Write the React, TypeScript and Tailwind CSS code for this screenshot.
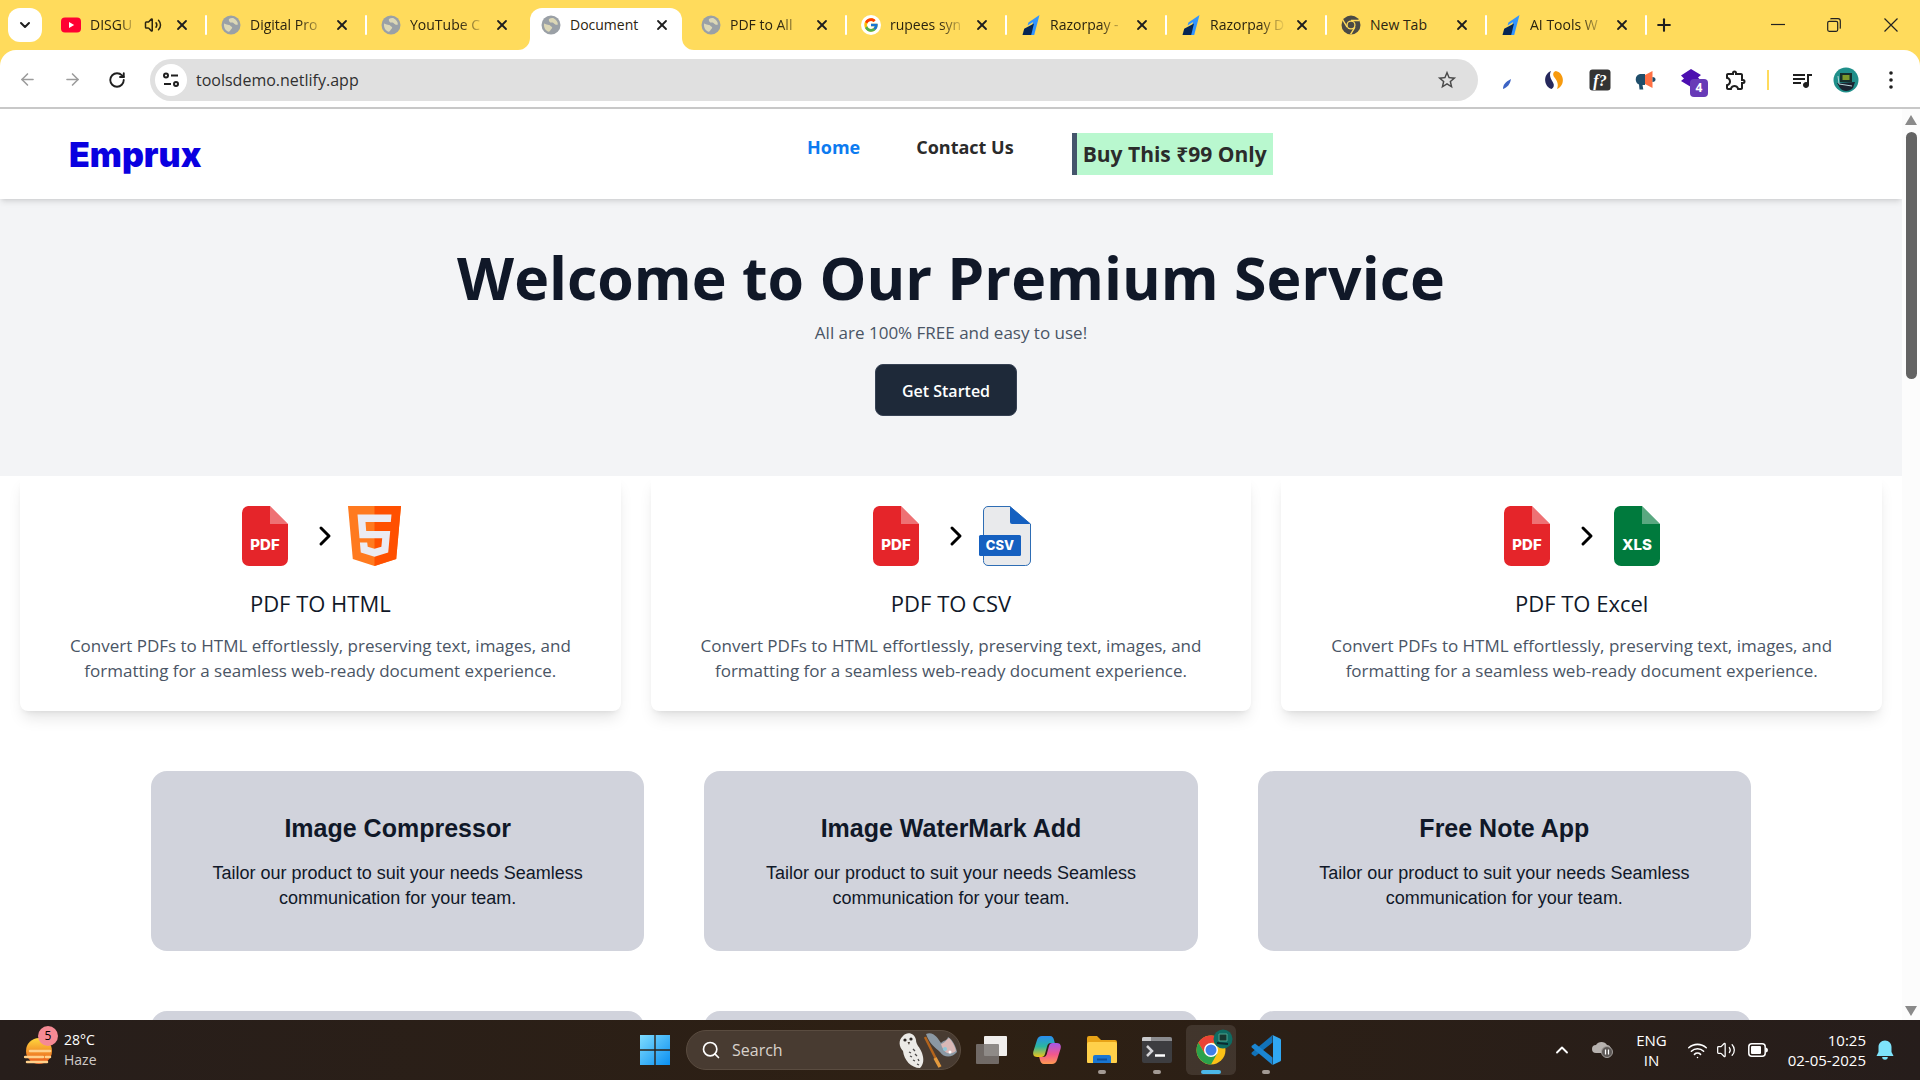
import type { ReactNode } from "react";
import {
  ArrowLeft,
  ArrowRight,
  ChevronDown,
  ChevronRight,
  ChevronUp,
  Plus,
  RotateCw,
  Search,
  Volume2,
  Wifi,
  X,
} from "lucide-react";
import { FcGoogle } from "react-icons/fc";
import { MdOutlineExtension, MdQueueMusic, MdStarBorder } from "react-icons/md";

type Tab = {
  title: string;
  icon: ReactNode;
  active?: boolean;
  audio?: boolean;
  fade?: boolean;
};

function Globe() {
  return (
    <svg viewBox="0 0 20 20" className="size-5">
      <circle cx="10" cy="10" r="9.5" fill="#9aa0a6" />
      <path
        d="M3 8.500c2 .5 3.500 1.500 5 1.500 1.500.2 1.800 1.500 3 2 .8 1-.8 2-1.500 3-.5 1-1 1.800-2 1.700C4.500 15.500 2.500 12.500 3 8.500zM8 4c1.500-1 3.500-1.400 5-.6 2.500 1.200 4 3.800 3.800 6-1 .6-2.800.2-3.800-1-1-1-2.600-.4-3.600-.8C8 6.800 7.500 5 8 4z"
        fill="#e8e0b8"
        opacity=".85"
      />
    </svg>
  );
}

function YouTube() {
  return (
    <svg viewBox="0 0 20 20" className="size-5">
      <rect y="2.500" width="20" height="15" rx="4" fill="#ff0033" />
      <path d="M8 7l5.200 3L8 13z" fill="#fff" />
    </svg>
  );
}

function Google() {
  return (
    <span className="flex size-5 items-center justify-center rounded-full bg-white">
      <FcGoogle className="size-4" />
    </span>
  );
}

function Razorpay() {
  return (
    <svg viewBox="0 0 20 20" className="size-5">
      <path d="M18.500 0l-5.300 20H8.600l3.500-13-5.500 3.600.8-3z" fill="#3395ff" />
      <path d="M3.200 13.700L1.500 20h8.700L13 8.500z" fill="#072654" />
    </svg>
  );
}

function ChromeGray() {
  return (
    <svg viewBox="0 0 20 20" className="size-5">
      <circle cx="10" cy="10" r="9.500" fill="#4a4a45" />
      <path
        d="M10 5.500h8.500M6.100 12.200L1.900 5M13.900 12.200L9.600 19.400"
        stroke="#ffdb5c"
        strokeWidth="1.400"
      />
      <circle cx="10" cy="10" r="4.600" fill="#ffdb5c" />
      <circle cx="10" cy="10" r="3.300" fill="#4a4a45" />
    </svg>
  );
}

const tabs: Tab[] = [
  { title: "DISGU", icon: <YouTube />, audio: true, fade: true },
  { title: "Digital Pro", icon: <Globe />, fade: true },
  { title: "YouTube C", icon: <Globe />, fade: true },
  { title: "Document", icon: <Globe />, active: true },
  { title: "PDF to All", icon: <Globe />, fade: true },
  { title: "rupees syn", icon: <Google />, fade: true },
  { title: "Razorpay -", icon: <Razorpay />, fade: true },
  { title: "Razorpay D", icon: <Razorpay />, fade: true },
  { title: "New Tab", icon: <ChromeGray /> },
  { title: "AI Tools W", icon: <Razorpay />, fade: true },
];

function BrowserTab({ tab, separator }: { tab: Tab; separator: boolean }) {
  return (
    <div className="relative flex h-full w-40 shrink-0 items-end">
      <div
        className={
          tab.active
            ? "ml-1 flex h-[42px] w-[152px] items-center rounded-t-xl bg-white pl-[11px]"
            : "flex h-[42px] w-40 items-center pl-[15px]"
        }
      >
        <div className="mb-2 flex h-6 flex-1 items-center">
          {tab.icon}
          <a
            href="#"
            className={`ml-[9px] text-sm whitespace-nowrap text-[#2b2410] ${
              tab.audio ? "w-[46px]" : "w-[76px]"
            } ${tab.fade ? "[mask-image:linear-gradient(to_right,black_65%,transparent_100%)]" : ""}`}
          >
            {tab.title}
          </a>
          {tab.audio && <Volume2 className="ml-[8px] size-[18px] text-[#2b2410]" />}
          <button aria-label={`Close ${tab.title}`} className={tab.audio ? "ml-3" : "ml-2"}>
            <X className="size-4 text-[#1f1f1f]" strokeWidth={2.75} />
          </button>
        </div>
      </div>
      {tab.active && (
        <>
          <svg viewBox="0 0 12 12" className="absolute bottom-0 -left-2 size-3">
            <path d="M12 0v12H0A12 12 0 0 0 12 0z" fill="#fff" />
          </svg>
          <svg viewBox="0 0 12 12" className="absolute -right-2 bottom-0 size-3">
            <path d="M0 0v12h12A12 12 0 0 1 0 0z" fill="#fff" />
          </svg>
        </>
      )}
      {separator && (
        <span className="absolute top-[15px] -right-px h-5 w-0.5 rounded-full bg-white" />
      )}
    </div>
  );
}

function TabStrip() {
  return (
    <div className="flex h-[50px] shrink-0 items-center bg-[#ffdb5c]">
      <button
        aria-label="Search tabs"
        className="mr-1 ml-2 flex size-[34px] items-center justify-center rounded-xl bg-white"
      >
        <ChevronDown className="size-4 text-[#1f1f1f]" strokeWidth={3} />
      </button>
      {tabs.map((tab, i) => (
        <BrowserTab
          key={i}
          tab={tab}
          separator={!tab.active && !tabs[i + 1]?.active}
        />
      ))}
      <button aria-label="New tab" className="ml-2">
        <Plus className="size-5 text-[#1f1f1f]" strokeWidth={2.5} />
      </button>
      <div className="ml-auto flex items-center">
        <button aria-label="Minimize" className="flex w-14 justify-center">
          <svg viewBox="0 0 14 14" className="size-3.5">
            <path d="M0 6.500h14" stroke="#222" strokeWidth="1.200" />
          </svg>
        </button>
        <button aria-label="Restore" className="flex w-14 justify-center">
          <svg viewBox="0 0 14 14" className="size-3.5" fill="none" stroke="#222" strokeWidth="1.200">
            <rect x=".7" y="3.300" width="10" height="10" rx="1.500" />
            <path d="M3.500 1.200q.3-.5 1-.5H11q2.300 0 2.300 2.300v6.500q0 .7-.5 1" />
          </svg>
        </button>
        <button aria-label="Close" className="flex w-[58px] justify-center">
          <svg viewBox="0 0 14 14" className="size-3.5">
            <path d="M.5.5l13 13M13.500.5l-13 13" stroke="#222" strokeWidth="1.200" />
          </svg>
        </button>
      </div>
    </div>
  );
}

function Extensions() {
  return (
    <div className="flex items-center">
      <button aria-label="Pen extension" className="flex w-[46px] justify-center">
        <svg viewBox="0 0 20 20" className="size-5">
          <path d="M5 19c0-4 2-7 8-10-1 5-3 8-8 10z" fill="#3c63c4" />
        </svg>
      </button>
      <button aria-label="Swirl extension" className="flex w-[46px] justify-center">
        <svg viewBox="0 0 20 20" className="size-5">
          <path d="M7 1C2.500 3 .8 7 1.200 11c.5 4 3 7 6.300 8 2.500-1.500 3-4 1.500-6.500C7.300 9.500 4.500 5.500 7 1z" fill="#26285c" />
          <path d="M13 19c4.500-2 6.200-6 5.800-10-.5-4-3-7.300-7-8-3 1-3.300 4-1.300 6.500 2.500 3 4.500 7 2.500 11.500z" fill="#f79a0e" />
        </svg>
      </button>
      <button aria-label="WhatFont" className="flex w-[46px] justify-center">
        <svg viewBox="0 0 22 22" className="size-[22px]">
          <rect x=".5" y=".5" width="21" height="21" rx="3" fill="#333" />
          <text x="11" y="16.500" textAnchor="middle" fontFamily="Liberation Serif, serif" fontStyle="italic" fontWeight="700" fontSize="16" fill="#fff">
            f?
          </text>
        </svg>
      </button>
      <button aria-label="Megaphone extension" className="flex w-[46px] justify-center">
        <svg viewBox="0 0 22 22" className="size-[22px]">
          <path d="M10 5v11H7.500l.8 4.500H4.500L4 15.500C-.5 14-.5 6 5 5z" fill="#1f4e6b" />
          <path d="M10 6l7.500-4v17L10 15z" fill="#ff7043" />
          <path d="M17.500 8c4 0 4 5 0 5z" fill="#1f4e6b" />
        </svg>
      </button>
      <button aria-label="Layers extension" className="relative flex w-[46px] justify-center">
        <svg viewBox="0 0 22 22" className="size-[22px]">
          <path d="M10 0l10 6-3 2.500 3 3L10 18 0 12l3-2.500L0 6.500z" fill="#4c0fb0" />
        </svg>
        <span className="absolute top-[10px] left-[21px] flex size-[18px] items-center justify-center rounded bg-[#673ab7] text-xs font-bold text-white">
          4
        </span>
      </button>
      <button aria-label="Extensions" className="flex w-[42px] justify-center">
        <MdOutlineExtension className="size-6 text-[#1f1f1f]" />
      </button>
    </div>
  );
}

function Avatar() {
  return (
    <svg viewBox="0 0 26 26" className="size-[26px]">
      <circle cx="13" cy="13" r="12.500" fill="#1f8f8a" />
      <path d="M7 6h12v9H7z" fill="#16302c" />
      <path d="M9.500 8h7v5h-7z" fill="#7b9a2c" />
      <path d="M4 16l18-1-2 6c-4 4-10 4-13 0z" fill="#1a2430" />
      <path d="M5 9l1 8 13 2" stroke="#b9d6d8" fill="none" />
    </svg>
  );
}

function Toolbar() {
  return (
    <div className="shrink-0 bg-[#ffdb5c]">
      <div className="flex h-[57px] items-center rounded-t-2xl bg-white pt-0.5">
        <div className="flex w-[150px] items-center pl-[18px] text-[#1f1f1f]">
          <button aria-label="Back" className="flex w-[45px] text-[#9c9c9c]">
            <ArrowLeft className="size-[19px]" />
          </button>
          <button aria-label="Forward" className="flex w-[45px] text-[#9c9c9c]">
            <ArrowRight className="size-[19px]" />
          </button>
          <button aria-label="Reload">
            <RotateCw className="size-[18px]" strokeWidth={2.5} />
          </button>
        </div>
        <div className="flex h-[42px] flex-1 items-center rounded-full bg-[#e0e0e0] pr-5 pl-[5px]">
          <button
            aria-label="View site information"
            className="flex size-8 shrink-0 items-center justify-center rounded-full bg-white"
          >
            <svg viewBox="0 0 18 18" className="size-[18px]" fill="none" stroke="#1f1f1f" strokeWidth="2">
              <circle cx="4" cy="4.500" r="2" />
              <path d="M9 4.500h7M2 13h7" />
              <circle cx="14" cy="13" r="2" />
            </svg>
          </button>
          <input
            aria-label="Address"
            defaultValue="toolsdemo.netlify.app"
            className="ml-[9px] h-8 flex-1 bg-transparent text-base text-[#303030] outline-none"
          />
          <button aria-label="Bookmark this tab">
            <MdStarBorder className="size-[22px] text-[#4a4a4a]" />
          </button>
        </div>
        <div className="ml-[7px] flex items-center pr-[7px]">
          <Extensions />
          <span className="mx-[10px] h-5 w-0.5 bg-[#ffdb5c]" />
          <button aria-label="Media controls" className="flex w-[45px] justify-center">
            <MdQueueMusic className="size-6 text-[#1f1f1f]" />
          </button>
          <button aria-label="Profile" className="flex w-11 justify-center">
            <Avatar />
          </button>
          <button aria-label="Menu" className="flex w-[45px] justify-center">
            <svg viewBox="0 0 4 18" className="h-[18px] w-1" fill="#1f1f1f">
              <circle cx="2" cy="2" r="1.800" />
              <circle cx="2" cy="9" r="1.800" />
              <circle cx="2" cy="16" r="1.800" />
            </svg>
          </button>
        </div>
      </div>
      <div className="h-0.5 bg-[#c8c8c8]" />
    </div>
  );
}

function FileIcon({ label, color }: { label: string; color: string }) {
  return (
    <svg viewBox="0 0 60 60" className="size-[60px]">
      <path d="M13 0h22l18 18v35a7 7 0 0 1-7 7H14a7 7 0 0 1-7-7V7a7 7 0 0 1 6-7z" fill={color} />
      <path d="M35 0l18 18H35z" fill="#fff" opacity=".35" />
      <text x="30" y="44" textAnchor="middle" fontFamily="Inter, sans-serif" fontWeight="800" fontSize="15" fill="#fff">
        {label}
      </text>
    </svg>
  );
}

function HtmlIcon() {
  return (
    <svg viewBox="0 0 60 60" className="size-[60px]">
      <path d="M3 0h53l-4.800 53L29.500 60 7.800 53z" fill="#ff7a1f" />
      <path d="M29.500 0H56l-4.800 53L29.500 60z" fill="#ff5000" />
      <path
        d="M12.500 8.500h34l-.7 7.500H20.500l.7 9h24l-2 21.500-13.700 4.300-13.700-4.300-.9-10h7.300l.5 4.300 6.800 2 6.900-2 .8-8.500H14.500z"
        fill="#ebebf2"
      />
    </svg>
  );
}

function CsvIcon() {
  return (
    <svg viewBox="0 0 60 60" className="size-[60px]">
      <path
        d="M12 .5h22L54.500 18v36a5 5 0 0 1-5 5.500H12a4.500 4.500 0 0 1-4.500-5V5A4.500 4.500 0 0 1 12 .5z"
        fill="#e9eaec"
        stroke="#2e6db4"
      />
      <path d="M34 .5L54.500 18H36a2 2 0 0 1-2-2z" fill="#1560c0" />
      <rect x="3" y="29" width="42" height="21" rx="1.500" fill="#1560c0" />
      <text x="24" y="44" textAnchor="middle" fontFamily="Inter, sans-serif" fontWeight="800" fontSize="13" fill="#fff">
        CSV
      </text>
    </svg>
  );
}

const converters = [
  { title: "PDF TO HTML", icon: <HtmlIcon /> },
  { title: "PDF TO CSV", icon: <CsvIcon /> },
  { title: "PDF TO Excel", icon: <FileIcon label="XLS" color="#007a3d" /> },
];

const tools = ["Image Compressor", "Image WaterMark Add", "Free Note App"];

function SiteHeader() {
  return (
    <header className="relative flex h-[90px] shrink-0 items-start bg-white shadow-md">
      <a
        href="#"
        className="w-[807px] pt-[26px] pl-[69px] font-['Inter',sans-serif] text-[34px] leading-10 font-black text-[#0a00e0]"
      >
        Emprux
      </a>
      <nav className="flex items-start pt-6 font-bold text-[#2b2b2b]">
        <a href="#" className="text-lg text-[#0d7bf0]">
          Home
        </a>
        <a href="#" className="ml-14 text-lg">
          Contact Us
        </a>
        <a
          href="#"
          className="ml-[58px] border-l-[5px] border-slate-600 bg-green-200 px-[6px] text-[21px] leading-[42px] whitespace-nowrap"
        >
          Buy This ₹99 Only
        </a>
      </nav>
    </header>
  );
}

function SitePage() {
  return (
    <div className="flex min-w-0 flex-1 flex-col overflow-hidden bg-white">
      <SiteHeader />

      <section className="flex h-[277px] shrink-0 flex-col items-center bg-gray-100 pt-10">
        <h1 className="text-[59px] leading-[76px] font-bold whitespace-nowrap text-gray-900">
          Welcome to Our Premium Service
        </h1>
        <p className="mt-1 text-[17px] leading-7 text-gray-600">
          All are 100% FREE and easy to use!
        </p>
        <button className="mt-[17px] mr-[10px] h-[52px] rounded-lg border border-gray-700 bg-gray-800 px-[26px] pt-0.5 font-semibold text-white">
          Get Started
        </button>
      </section>

      <section className="grid shrink-0 grid-cols-3 gap-[30px] px-5">
        {converters.map((c) => (
          <article
            key={c.title}
            className="flex h-[235px] flex-col items-center rounded-b-lg bg-white px-5 pt-[30px] text-center shadow-lg"
          >
            <div className="flex items-center">
              <FileIcon label="PDF" color="#e5252a" />
              <ChevronRight className="mr-[4px] ml-[14px] size-8 text-black" strokeWidth={2.25} />
              {c.icon}
            </div>
            <h2 className="mt-[23px] text-[22px] leading-7 font-medium text-gray-900">
              {c.title}
            </h2>
            <p className="mt-4 max-w-[520px] text-[17px] leading-[25px] text-gray-600">
              Convert PDFs to HTML effortlessly, preserving text, images, and formatting for a
              seamless web-ready document experience.
            </p>
          </article>
        ))}
      </section>

      <section className="mx-auto mt-[60px] grid w-full max-w-[1600px] shrink-0 grid-cols-3 gap-[60px] font-['Liberation_Sans',Arial,sans-serif]">
        {tools.map((name) => (
          <article
            key={name}
            className="h-[180px] rounded-2xl bg-[#d1d3dc] pt-10 text-center text-gray-900"
          >
            <h3 className="text-[25px] leading-[34px] font-bold">{name}</h3>
            <p className="mx-auto mt-4 max-w-[380px] text-lg leading-[25px]">
              Tailor our product to suit your needs Seamless communication for your team.
            </p>
          </article>
        ))}
        {/* next row, only its top edge is in view */}
        {[0, 1, 2].map((n) => (
          <article key={n} className="h-[180px] rounded-2xl bg-[#d1d3dc]" />
        ))}
      </section>
    </div>
  );
}

function Scrollbar() {
  return (
    <div className="flex w-[18px] shrink-0 flex-col items-center bg-[#fcfcfc] pt-[6px] pb-1">
      <svg viewBox="0 0 12 10" className="h-[10px] w-3">
        <path d="M6 0l6 10H0z" fill="#8a8a8a" />
      </svg>
      <div className="mt-[7px] h-[247px] w-[11px] rounded-full bg-[#636363]" />
      <svg viewBox="0 0 12 10" className="mt-auto h-[10px] w-3">
        <path d="M6 10L0 0h12z" fill="#8a8a8a" />
      </svg>
    </div>
  );
}

function TaskButton({
  label,
  children,
  mark,
}: {
  label: string;
  children: ReactNode;
  mark?: "open" | "focused";
}) {
  return (
    <button
      aria-label={label}
      className={
        mark === "focused"
          ? "relative mx-[2px] flex size-[50px] items-center justify-center rounded-md bg-white/10"
          : "relative flex h-[50px] w-[55px] items-center justify-center"
      }
    >
      {children}
      {mark === "open" && (
        <span className="absolute bottom-px h-1 w-2 rounded-full bg-[#a39a94]" />
      )}
      {mark === "focused" && (
        <span className="absolute bottom-px h-1 w-5 rounded-full bg-[#4cb8e8]" />
      )}
    </button>
  );
}

function SearchArt() {
  return (
    <svg viewBox="0 0 62 38" className="h-[38px] w-[62px]">
      <path d="M6 5c4-5 12-3 13 4 0 5 4 7 6 13 2 6 2 11-2 15-9 0-16-8-17-17C2 16 1 9 6 5z" fill="#eceae6" />
      <circle cx="8" cy="9" r="1.600" fill="#2c2724" />
      <circle cx="14" cy="8" r="1.600" fill="#2c2724" />
      <path d="M10.500 11l1.500 3 1-3z" fill="#443a30" />
      <path d="M12 21l2 1M16 18l2 2M13 25l2 1M18 23l2 2M16 29l2 1M21 28l1 2M20 33l2 1" stroke="#4d4a4a" strokeWidth="1.300" />
      <path d="M29 3c8-3 12 5 15 9 3-3 6-2 7-6 4 2 8 9 9 15-5 6-13 6-17 0C38 16 33 14 29 3z" fill="#8b98a3" />
      <path d="M44 13c4-1 6-5 8-6 3 3 6 8 7 13-5 4-12 4-15-7z" fill="#d9b8b6" />
      <circle cx="48" cy="18" r="2" fill="#8ec7d8" />
      <circle cx="53" cy="21" r="1.500" fill="#fff" />
      <path d="M28 6l14 28" stroke="#b4651d" strokeWidth="2.500" />
      <path d="M38 27l5 9" stroke="#e39a3e" strokeWidth="3.500" />
    </svg>
  );
}

function Taskbar() {
  return (
    <footer className="flex h-[60px] shrink-0 items-center bg-linear-to-r from-[#271e1b] via-[#2e2013] to-[#261d1b] text-sm leading-5 text-white">
      <div className="flex w-[627px] items-center">
        <button className="relative flex items-center pl-6 text-left">
          <svg viewBox="0 0 30 34" className="mr-[10px] h-[34px] w-[30px]">
            <defs>
              <linearGradient id="haze" x1="0" y1="0" x2="0" y2="1">
                <stop offset="0" stopColor="#ffd83d" />
                <stop offset="1" stopColor="#e8541a" />
              </linearGradient>
            </defs>
            <circle cx="15" cy="18" r="13" fill="url(#haze)" />
            <path d="M6 18h20M1 24h18M22 24h4M3 29h20" stroke="#ffd08a" strokeWidth="2.500" strokeLinecap="round" />
          </svg>
          <span>
            28°C
            <br />
            <span className="text-[#cfcac7]">Haze</span>
          </span>
          <span className="absolute -top-1 left-[38px] flex size-5 items-center justify-center rounded-full bg-[#f58a94] text-xs text-black">
            5
          </span>
        </button>
      </div>

      <TaskButton label="Start">
        <svg viewBox="0 0 30 30" className="size-[30px]">
          <defs>
            <linearGradient id="win" x1="0" y1="0" x2="1" y2="1">
              <stop offset="0" stopColor="#7fdcff" />
              <stop offset="1" stopColor="#0a8ff0" />
            </linearGradient>
          </defs>
          <path d="M0 0h14.300v14.300H0zM15.700 0H30v14.300H15.700zM0 15.700h14.300V30H0zM15.700 15.700H30V30H15.700z" fill="url(#win)" />
        </svg>
      </TaskButton>
      <label className="mr-[3px] ml-1 flex h-10 w-[275px] items-center rounded-full border border-[#5a4c40] bg-[#483b31] pl-[14px]">
        <Search className="size-5 shrink-0 text-white" />
        <input
          aria-label="Search"
          placeholder="Search"
          className="ml-[11px] w-[165px] bg-transparent text-base outline-none placeholder:text-[#d8d2cc]"
        />
        <SearchArt />
      </label>
      <TaskButton label="Task view">
        <svg viewBox="0 0 32 28" className="h-7 w-8">
          <rect x="8" width="23" height="20" rx="1" fill="#f0eeec" />
          <rect y="8" width="23" height="20" rx="1" fill="#7c7876" opacity=".85" />
        </svg>
      </TaskButton>
      <TaskButton label="Copilot">
        <svg viewBox="0 0 30 30" className="size-[30px]">
          <defs>
            <linearGradient id="copA" x1="0" y1="0" x2="0" y2="1">
              <stop offset="0" stopColor="#2a8cf0" />
              <stop offset=".5" stopColor="#2bb5a0" />
              <stop offset="1" stopColor="#f0c419" />
            </linearGradient>
            <linearGradient id="copB" x1="0" y1="0" x2="0" y2="1">
              <stop offset="0" stopColor="#a558e8" />
              <stop offset=".55" stopColor="#f2578c" />
              <stop offset="1" stopColor="#ff9a52" />
            </linearGradient>
          </defs>
          <path d="M10 1h8c2.500 0 3.500 1.800 4 4l.8 3h-4c-2 0-3 1-3.600 3L13 19c-.6 2-1.600 3-3.500 3H5C1.500 22 .5 19 1.500 16L5 5c.8-2.500 2.500-4 5-4z" fill="url(#copA)" />
          <path d="M20 29h-8c-2.500 0-3.500-1.800-4-4l-.8-3h4c2 0 3-1 3.600-3L17 11c.6-2 1.600-3 3.500-3H25c3.500 0 4.500 3 3.500 6L25 25c-.8 2.500-2.500 4-5 4z" fill="url(#copB)" />
        </svg>
      </TaskButton>
      <TaskButton label="File Explorer" mark="open">
        <svg viewBox="0 0 32 30" className="h-[30px] w-8">
          <path d="M1 3q0-2 2-2h8l4 4h14q2 0 2 2v4H1z" fill="#e8a317" />
          <path d="M1 9q0-2 2-2h26q2 0 2 2v18q0 1-1 1H2q-1 0-1-1z" fill="#ffd04a" />
          <path d="M7 28v-6q0-2 2-2h14q2 0 2 2v6z" fill="#1976d2" />
          <path d="M11 24.500h10" stroke="#0c4f9c" strokeWidth="2" />
        </svg>
      </TaskButton>
      <TaskButton label="Terminal" mark="open">
        <svg viewBox="0 0 30 26" className="h-[26px] w-[30px]">
          <rect width="30" height="26" rx="2" fill="#3d3d40" />
          <path d="M0 4V2q0-2 2-2h26q2 0 2 2v2z" fill="#8b8b8e" />
          <path d="M0 4V2q0-2 2-2h7v4z" fill="#c9c9cb" />
          <path d="M5 9l5 5-5 5" fill="none" stroke="#d5d5d8" strokeWidth="2.500" />
          <path d="M13 18.500h10" stroke="#fff" strokeWidth="2.500" />
        </svg>
      </TaskButton>
      <TaskButton label="Google Chrome" mark="focused">
        <svg viewBox="0 0 30 30" className="size-[30px]">
          <circle cx="15" cy="15" r="14.500" fill="#fbc116" />
          <path d="M2.400 7.800A14.500 14.500 0 0 1 27.600 7.800H15L8.800 18.600z" fill="#ea4335" />
          <path d="M2.400 7.800A14.500 14.500 0 0 0 15 29.500l6.200-10.900H8.800z" fill="#2ba24c" />
          <circle cx="15" cy="15" r="7" fill="#fff" />
          <circle cx="15" cy="15" r="5.500" fill="#3f7ee8" />
        </svg>
        <svg viewBox="0 0 20 20" className="absolute top-1 right-[3px] size-5">
          <circle cx="10" cy="10" r="9.500" fill="#0f6b62" />
          <path d="M6 5h8v7H6z" fill="#17362f" stroke="#4ea58f" />
          <path d="M4 14l11 1" stroke="#0b2a30" strokeWidth="2" />
        </svg>
      </TaskButton>
      <TaskButton label="Visual Studio Code" mark="open">
        <svg viewBox="0 0 32 32" className="size-8">
          <path d="M22.500 1v7.500L5 22.500 1.500 20l.2-1.500z" fill="#1272b8" />
          <path d="M22.500 31v-7.500L5 9.500 1.500 12l.2 1.500z" fill="#1b86d3" />
          <path d="M22.500 1L30 4.500q1 .5 1 1.500v20q0 1-1 1.500L22.500 31q.5-.5.500-1.500v-27Q23 1.500 22.500 1z" fill="#30a7f2" />
        </svg>
      </TaskButton>

      <div className="ml-auto flex items-center pr-[26px]">
        <button aria-label="Show hidden icons" className="mr-5">
          <ChevronUp className="size-5" strokeWidth={2.25} />
        </button>
        <svg viewBox="0 0 22 18" className="mr-[22px] h-[18px] w-[22px]">
          <path d="M4 12a4 4 0 0 1 0-8c2-4 9-4 11 0 3 0 5 3 4 8z" fill="#b7b2af" />
          <circle cx="15" cy="11" r="5.500" fill="#5d5856" stroke="#a19c99" />
          <path d="M13.500 8.500v5M16.500 8.500v5" stroke="#fff" strokeWidth="1.200" />
        </svg>
        <span className="mr-5 text-center text-[15px]">
          ENG
          <br />
          IN
        </span>
        <Wifi className="mr-2 size-[21px]" strokeWidth={1.75} />
        <Volume2 className="mr-3 size-5" strokeWidth={1.5} />
        <svg viewBox="0 0 20 14" className="mr-5 h-[14px] w-5">
          <rect x=".8" y=".8" width="16.400" height="12.400" rx="3" fill="none" stroke="#fff" strokeWidth="1.500" />
          <rect x="3" y="3" width="10" height="8" rx="1" fill="#fff" />
          <path d="M18 4.500q2 .5 2 2.500t-2 2.500z" fill="#fff" />
        </svg>
        <span className="mr-[10px] text-right text-[15px]">
          10:25
          <br />
          02-05-2025
        </span>
        <svg viewBox="0 0 18 20" className="h-5 w-[18px]">
          <path d="M9 .5c4 0 6.500 3 6.500 6.500v5l2 4H.5l2-4V7C2.500 3.500 5 .5 9 .5z" fill="#7ee3fb" />
          <path d="M6.200 17h5.600a2.800 2.800 0 0 1-5.600 0z" fill="#7ee3fb" />
        </svg>
      </div>
    </footer>
  );
}

export default function App() {
  return (
    <div className="flex h-screen flex-col overflow-hidden bg-white font-['Open_Sans','Noto_Sans',sans-serif]">
      <TabStrip />
      <Toolbar />
      <main className="flex min-h-0 flex-1">
        <SitePage />
        <Scrollbar />
      </main>
      <Taskbar />
    </div>
  );
}
